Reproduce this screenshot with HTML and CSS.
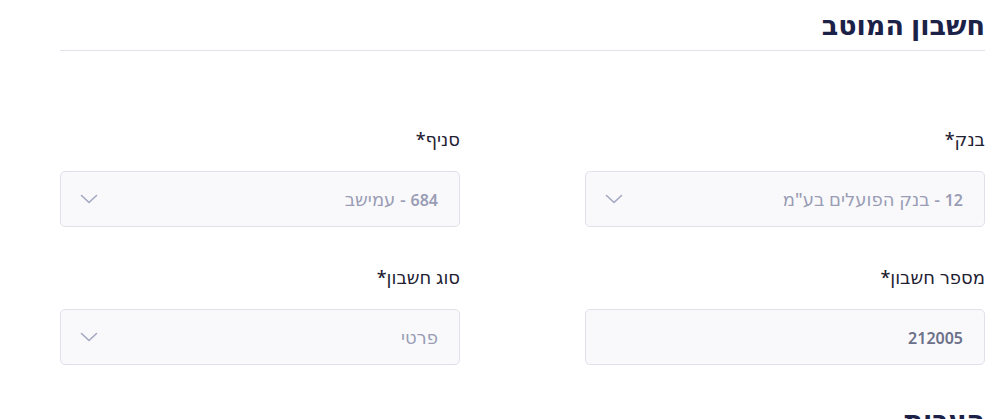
FILE: index.html
```html
<!DOCTYPE html>
<html lang="he" dir="rtl">
<head>
<meta charset="utf-8">
<title>חשבון המוטב</title>
<link rel="stylesheet" href="styles.css">
</head>
<body>
<main class="page">
  <section class="section">
    <h2 class="section-title">חשבון המוטב</h2>
    <div class="form-grid">
      <div class="field">
        <label class="field-label">בנק*</label>
        <div class="control select">
          <span class="value"><span class="num">12</span> - בנק הפועלים בע"מ</span>
          <svg class="chevron" width="18" height="10" viewBox="0 0 18 10"><polyline points="1.5,1.5 9,8.5 16.5,1.5" fill="none" stroke="#a3a7c2" stroke-width="1.6" stroke-linecap="round" stroke-linejoin="round"/></svg>
        </div>
      </div>
      <div class="field">
        <label class="field-label">סניף*</label>
        <div class="control select">
          <span class="value"><span class="num">684</span> - עמישב</span>
          <svg class="chevron" width="18" height="10" viewBox="0 0 18 10"><polyline points="1.5,1.5 9,8.5 16.5,1.5" fill="none" stroke="#a3a7c2" stroke-width="1.6" stroke-linecap="round" stroke-linejoin="round"/></svg>
        </div>
      </div>
      <div class="field">
        <label class="field-label">מספר חשבון*</label>
        <div class="control input">
          <span class="value strong"><span class="num">212005</span></span>
        </div>
      </div>
      <div class="field">
        <label class="field-label">סוג חשבון*</label>
        <div class="control select">
          <span class="value">פרטי</span>
          <svg class="chevron" width="18" height="10" viewBox="0 0 18 10"><polyline points="1.5,1.5 9,8.5 16.5,1.5" fill="none" stroke="#a3a7c2" stroke-width="1.6" stroke-linecap="round" stroke-linejoin="round"/></svg>
        </div>
      </div>
    </div>
  </section>
  <section class="section next">
    <h2 class="section-title plain">הערות</h2>
  </section>
</main>
</body>
</html>
```
FILE: styles.css
```css
html, body {
  margin: 0;
  padding: 0;
  background: #ffffff;
}
body {
  font-family: "Noto Sans", "DejaVu Sans", sans-serif;
  color: #1f2245;
  overflow: hidden;
}
.page {
  width: 925px;
  margin-left: 60px;
  margin-right: 22px;
}
.section-title {
  margin: 0;
  font-size: 27px;
  font-weight: 700;
  line-height: 36px;
  color: #1c2148;
  padding-top: 7px;
  padding-bottom: 7px;
  border-bottom: 1px solid #e2e2ec;
}
.section-title.plain {
  border-bottom: none;
}
.form-grid {
  display: grid;
  grid-template-columns: 400px 400px;
  column-gap: 125px;
  row-gap: 38px;
  margin-top: 76px;
}
.field {
  display: flex;
  flex-direction: column;
}
.field-label {
  font-size: 18px;
  line-height: 24px;
  font-weight: 500;
  color: #1f2233;
  margin-bottom: 20px;
}
.control {
  box-sizing: border-box;
  height: 56px;
  background: #f9f9fb;
  border: 1px solid #e1e1ec;
  border-radius: 5px;
  display: flex;
  align-items: center;
  justify-content: space-between;
  padding: 0 21px 0 19px;
}
.value {
  font-size: 18px;
  color: #9a9db5;
  font-weight: 500;
}
.num {
  font-size: 16px;
  font-weight: 600;
}
.value.strong {
  color: #6c7089;
}
.chevron {
  display: block;
}
.next {
  margin-top: 30px;
}
```
